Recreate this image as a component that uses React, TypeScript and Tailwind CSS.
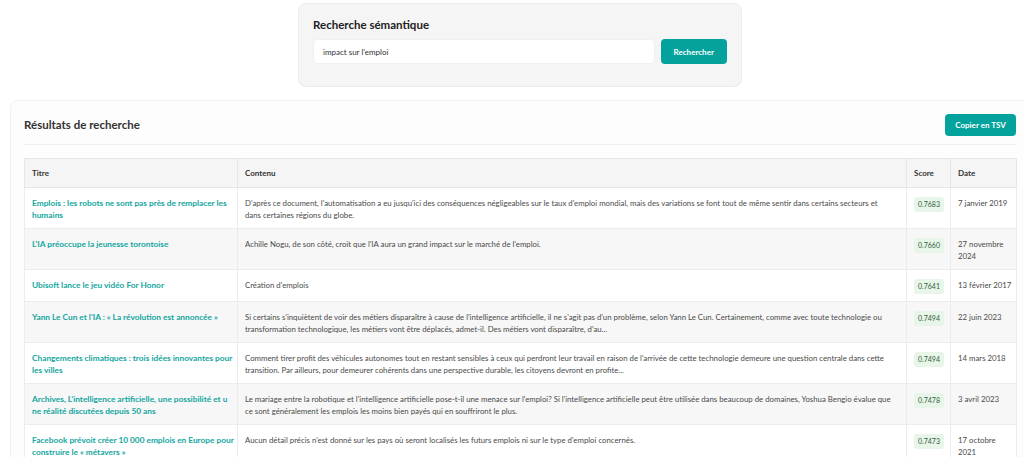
import React from 'react';

type Row = {
  title: React.ReactNode;
  content: string;
  score: string;
  date: string;
};

const rows: Row[] = [
  {
    title: 'Emplois : les robots ne sont pas près de remplacer les humains',
    content:
      "D'après ce document, l'automatisation a eu jusqu'ici des conséquences négligeables sur le taux d'emploi mondial, mais des variations se font tout de même sentir dans certains secteurs et dans certaines régions du globe.",
    score: '0.7683',
    date: '7 janvier 2019',
  },
  {
    title: "L'IA préoccupe la jeunesse torontoise",
    content: "Achille Nogu, de son côté, croit que l'IA aura un grand impact sur le marché de l'emploi.",
    score: '0.7660',
    date: '27 novembre 2024',
  },
  {
    title: 'Ubisoft lance le jeu vidéo For Honor',
    content: "Création d'emplois",
    score: '0.7641',
    date: '13 février 2017',
  },
  {
    title: "Yann Le Cun et l'IA : « La révolution est annoncée »",
    content:
      "Si certains s'inquiètent de voir des métiers disparaître à cause de l'intelligence artificielle, il ne s'agit pas d'un problème, selon Yann Le Cun. Certainement, comme avec toute technologie ou transformation technologique, les métiers vont être déplacés, admet-il. Des métiers vont disparaître, d'au...",
    score: '0.7494',
    date: '22 juin 2023',
  },
  {
    title: 'Changements climatiques : trois idées innovantes pour les villes',
    content:
      "Comment tirer profit des véhicules autonomes tout en restant sensibles à ceux qui perdront leur travail en raison de l'arrivée de cette technologie demeure une question centrale dans cette transition. Par ailleurs, pour demeurer cohérents dans une perspective durable, les citoyens devront en profite...",
    score: '0.7494',
    date: '14 mars 2018',
  },
  {
    title: (
      <>
        Archives, L{'\u2019'}intelligence artificielle, une possibilité et u
        <br />
        ne réalité discutées depuis 50 ans
      </>
    ),
    content:
      "Le mariage entre la robotique et l'intelligence artificielle pose-t-il une menace sur l'emploi? Si l'intelligence artificielle peut être utilisée dans beaucoup de domaines, Yoshua Bengio évalue que ce sont généralement les emplois les moins bien payés qui en souffriront le plus.",
    score: '0.7478',
    date: '3 avril 2023',
  },
  {
    title: 'Facebook prévoit créer 10 000 emplois en Europe pour construire le « métavers »',
    content:
      "Aucun détail précis n'est donné sur les pays où seront localisés les futurs emplois ni sur le type d'emploi concernés.",
    score: '0.7473',
    date: '17 octobre 2021',
  },
];

const th = 'border border-[#e6e6e6] px-[7px] py-[8px] text-left text-[8px] font-bold text-[#333]';
const td = 'border border-[#ececec] pl-[7px] pt-[9px] pb-[7px] align-top';

export default function App() {
  return (
    <div
      className="min-h-screen w-[1040px] overflow-hidden bg-white text-[#333]"
      style={{ fontFamily: 'Lato, "Open Sans", sans-serif' }}
    >
      {/* Search panel */}
      <div className="flex justify-center pt-[3px]">
        <div className="w-[444px] rounded-lg border border-[#ececec] bg-[#f5f5f5] px-[14px] pt-[14px] pb-[22px]">
          <h2 className="text-[11.5px] font-bold leading-[14px] text-[#222]">Recherche sémantique</h2>
          <div className="mt-[7px] flex items-center gap-[6px]">
            <input
              readOnly
              value="impact sur l'emploi"
              className="h-[25px] w-[344px] rounded-[4px] border border-[#f0f0f0] bg-white px-[9px] text-[8px] text-[#333] outline-none"
            />
            <button className="h-[25px] w-[67px] rounded-[4px] bg-[#03a29c] text-[8px] font-bold text-white">
              Rechercher
            </button>
          </div>
        </div>
      </div>

      {/* Results card */}
      <div className="ml-[10px] mt-[13px] w-[1020px] rounded-t-lg border border-[#f0f0f0] bg-[#fdfdfd] px-[13px]">
        <div className="flex items-center justify-between border-b border-[#f0f0f0] pt-[13px] pb-[8px]">
          <h2 className="text-[11.5px] font-bold text-[#333]">Résultats de recherche</h2>
          <button className="h-[22px] w-[71px] rounded-[4px] bg-[#03a29c] text-[8px] font-bold text-white">
            Copier en TSV
          </button>
        </div>

        <table className="mt-[13px] w-[992px] table-fixed border-collapse leading-[12px]">
          <colgroup>
            <col className="w-[213px]" />
            <col className="w-[669px]" />
            <col className="w-[44px]" />
            <col className="w-[66px]" />
          </colgroup>
          <thead>
            <tr className="bg-[#f5f5f5]">
              <th className={th}>Titre</th>
              <th className={th}>Contenu</th>
              <th className={th}>Score</th>
              <th className={th}>Date</th>
            </tr>
          </thead>
          <tbody>
            {rows.map((r, i) => (
              <tr key={i} className={i % 2 === 1 ? 'bg-[#f7f7f7]' : 'bg-white'}>
                <td className={`${td} pr-[3px] text-[8.3px] font-bold text-[#12a6a0]`}>{r.title}</td>
                <td className={`${td} pr-[14px] text-[7.8px] text-[#4a4a4a]`}>{r.content}</td>
                <td className={`${td} pr-[4px]`}>
                  <span className="inline-block rounded-[3px] bg-[#e8f5e9] px-[4px] py-[2px] align-top text-[7px] leading-[11px] text-[#2f5f3a]">
                    {r.score}
                  </span>
                </td>
                <td className={`${td} pr-[3px] text-[7.8px] text-[#4a4a4a]`}>{r.date}</td>
              </tr>
            ))}
          </tbody>
        </table>
      </div>
    </div>
  );
}
